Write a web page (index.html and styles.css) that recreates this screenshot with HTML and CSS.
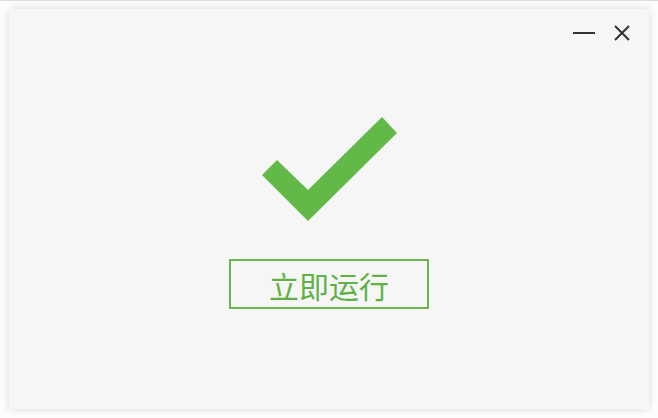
FILE: index.html
```html
<!DOCTYPE html>
<html lang="zh-CN">
<head>
  <meta charset="UTF-8">
  <meta name="viewport" content="width=device-width, initial-scale=1.0">
  <title>安装完成</title>
  <link rel="stylesheet" href="styles.css">
</head>
<body>
  <div class="window">
    <div class="controls">
      <button class="ctrl" title="最小化">
        <svg width="22" height="16" viewBox="0 0 22 16"><line x1="0" y1="8" x2="22" y2="8" stroke="#333" stroke-width="2"/></svg>
      </button>
      <button class="ctrl" title="关闭">
        <svg width="16" height="16" viewBox="0 0 16 16"><path d="M1 1 L15 15 M15 1 L1 15" stroke="#333" stroke-width="2"/></svg>
      </button>
    </div>
    <div class="content">
      <svg class="check" width="135" height="104" viewBox="0 0 135 104">
        <polygon points="0,58 15,43 46,73 120,0 135,16 46,104" fill="#62b947"/>
      </svg>
      <button class="run">立即运行</button>
    </div>
  </div>
</body>
</html>
```

FILE: styles.css
```css
html, body {
  margin: 0;
  padding: 0;
}
body {
  background: #fdfdfd;
  border-top: 1px solid #dcdcdc;
  padding: 8px 9px;
  font-family: "Noto Sans CJK SC", "Noto Sans", sans-serif;
}
.window {
  width: 640px;
  height: 400px;
  background: #f6f6f6;
  box-shadow: 0 0 8px rgba(0, 0, 0, 0.15);
  display: flex;
  flex-direction: column;
}
.controls {
  display: flex;
  justify-content: flex-end;
  gap: 19px;
  padding: 16px 19px 0 0;
}
.ctrl {
  border: none;
  background: none;
  padding: 0;
  margin: 0;
  cursor: pointer;
  display: block;
  line-height: 0;
}
.content {
  display: flex;
  flex-direction: column;
  align-items: center;
}
.check {
  display: block;
  margin-top: 76px;
}
.run {
  margin-top: 38px;
  box-sizing: border-box;
  width: 200px;
  height: 50px;
  border: 2px solid #6cb555;
  background: transparent;
  color: #5fb246;
  font-family: "Noto Sans CJK SC", "Noto Sans", sans-serif;
  font-size: 30px;
  padding: 2px 0 0;
  cursor: pointer;
}
```
